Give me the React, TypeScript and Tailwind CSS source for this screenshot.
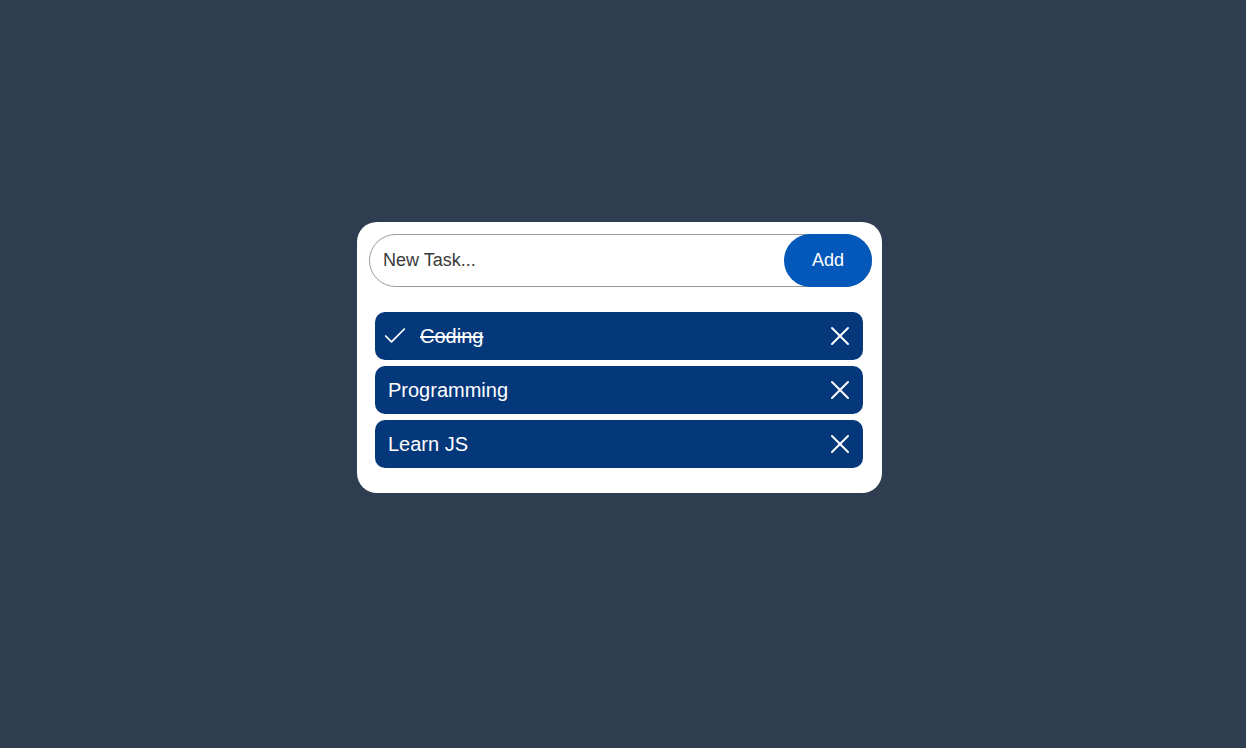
import { Check, X } from "lucide-react";

const tasks = [
  { name: "Coding", done: true },
  { name: "Programming", done: false },
  { name: "Learn JS", done: false },
];

export default function App() {
  return (
    <div className="min-h-screen w-full bg-[#2e3e50] flex items-center justify-center font-['Liberation_Sans',Arial,sans-serif]">
      <div className="w-[525px] bg-white rounded-[20px] pt-3 pb-[25px] pl-3 pr-[10px] mb-[33px] mr-[7px]">
        {/* Input row */}
        <div className="relative flex h-[53px]">
          <input
            className="flex-1 h-full rounded-full border border-[#9a9a9a] pl-[13px] pr-24 text-[18px] text-[#3a3a3a] placeholder:text-[#3a3a3a] outline-none"
            placeholder="New Task..."
          />
          <button className="absolute right-0 top-0 h-full w-[88px] rounded-full bg-[#0458b9] text-white text-[18px]">
            Add
          </button>
        </div>

        {/* Tasks */}
        <ul className="mt-[25px] ml-[6px] w-[488px] flex flex-col gap-[6px]">
          {tasks.map((t) => (
            <li
              key={t.name}
              className="h-12 rounded-[10px] bg-[#05387a] flex items-center justify-between pl-[13px] pr-[7px] text-white"
            >
              <div className="flex items-center">
                {t.done && (
                  <Check size={28} strokeWidth={1.5} className="-ml-[7px] mr-[11px]" />
                )}
                <span className={t.done ? "text-[20px] line-through" : "text-[20px]"}>
                  {t.name}
                </span>
              </div>
              <X size={32} strokeWidth={1.5} />
            </li>
          ))}
        </ul>
      </div>
    </div>
  );
}
